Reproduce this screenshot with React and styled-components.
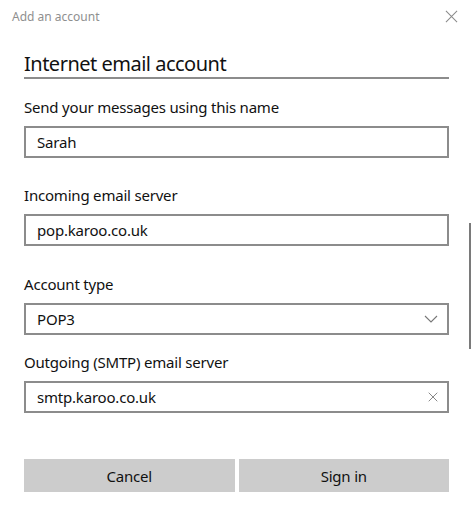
import React from "react";
import styled, { createGlobalStyle } from "styled-components";

const GlobalStyle = createGlobalStyle`
  html, body {
    margin: 0;
    padding: 0;
    background: #ffffff;
  }
  body {
    font-family: "Noto Sans", "Open Sans", sans-serif;
    color: #111111;
  }
`;

const Dialog = styled.div`
  position: relative;
  width: 474px;
  height: 506px;
  background: #ffffff;
  overflow: hidden;
`;

const Header = styled.header`
  height: 32px;
  padding: 0 16px 0 12px;
  display: flex;
  align-items: center;
  justify-content: space-between;
`;

const HeaderTitle = styled.span`
  font-size: 12px;
  color: #8f8f8f;
`;

const CloseButton = styled.button`
  border: none;
  background: none;
  padding: 0;
  width: 14px;
  height: 14px;
  display: flex;
  align-items: center;
  justify-content: center;
  color: #8a8a8a;
`;

const Body = styled.main`
  padding: 19px 25px 0 24px;
  display: flex;
  flex-direction: column;
`;

const Title = styled.h1`
  margin: 0;
  font-size: 20px;
  letter-spacing: -0.5px;
  font-weight: 400;
  line-height: 26px;
  border-bottom: 2px solid #8c8c8c;
  color: #111111;
`;

const Field = styled.div`
  display: flex;
  flex-direction: column;
  gap: 9px;
  margin-top: ${(props) => props.$top}px;
`;

const Label = styled.label`
  font-size: 15px;
  letter-spacing: -0.2px;
  line-height: 20px;
  color: #111111;
`;

const InputBox = styled.div`
  box-sizing: border-box;
  height: 32px;
  border: 2px solid #8c8c8c;
  display: flex;
  align-items: center;
  justify-content: space-between;
  padding: 0 9px 0 11px;
  font-size: 15px;
  letter-spacing: -0.2px;
  color: #111111;
`;

const Icon = styled.span`
  display: flex;
  align-items: center;
  color: #777777;
`;

const Buttons = styled.div`
  margin-top: 46px;
  display: grid;
  grid-template-columns: 1fr 1fr;
  gap: 4px;
`;

const Button = styled.button`
  height: 33px;
  border: none;
  background: #cccccc;
  font-family: "Noto Sans", "Open Sans", sans-serif;
  font-size: 15px;
  letter-spacing: -0.2px;
  color: #111111;
  padding: 0;
`;

const ScrollThumb = styled.div`
  position: absolute;
  left: 469px;
  top: 223px;
  width: 2px;
  height: 126px;
  background: #7a7a7a;
`;

const XMark = ({ size, color }) => (
  <svg width={size} height={size} viewBox="0 0 14 14" fill="none">
    <path d="M1 1L13 13M13 1L1 13" stroke={color} strokeWidth="1.1" />
  </svg>
);

const Chevron = () => (
  <svg width="14" height="8" viewBox="0 0 14 8" fill="none">
    <path d="M1 1L7 7L13 1" stroke="#777" strokeWidth="1.1" />
  </svg>
);

const fields = [
  { label: "Send your messages using this name", value: "Sarah", top: 18 },
  { label: "Incoming email server", value: "pop.karoo.co.uk", top: 27 },
  { label: "Account type", value: "POP3", top: 28, icon: "chevron" },
  { label: "Outgoing (SMTP) email server", value: "smtp.karoo.co.uk", top: 17, icon: "clear" },
];

export default function App() {
  return (
    <>
      <GlobalStyle />
      <Dialog>
        <Header>
          <HeaderTitle>Add an account</HeaderTitle>
          <CloseButton>
            <XMark size={13} color="#8a8a8a" />
          </CloseButton>
        </Header>
        <Body>
          <Title>Internet email account</Title>
          {fields.map((f) => (
            <Field key={f.label} $top={f.top}>
              <Label>{f.label}</Label>
              <InputBox>
                <span>{f.value}</span>
                {f.icon === "chevron" && (
                  <Icon>
                    <Chevron />
                  </Icon>
                )}
                {f.icon === "clear" && (
                  <Icon>
                    <XMark size={10} color="#666" />
                  </Icon>
                )}
              </InputBox>
            </Field>
          ))}
          <Buttons>
            <Button>Cancel</Button>
            <Button>Sign in</Button>
          </Buttons>
        </Body>
        <ScrollThumb />
      </Dialog>
    </>
  );
}
